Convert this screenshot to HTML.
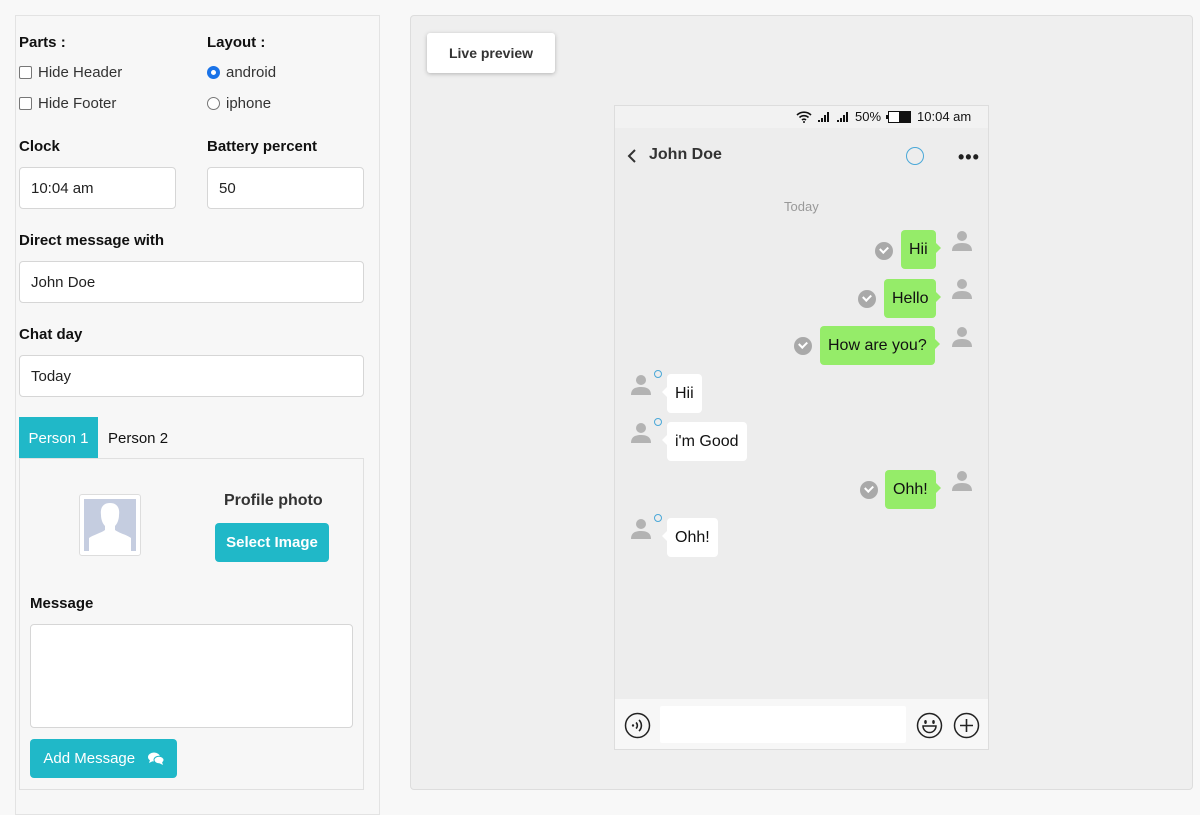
<!DOCTYPE html>
<html><head><style>
*{box-sizing:border-box;margin:0;padding:0}
body{width:1200px;height:796px;background:#f8f8f8;font-family:"Liberation Sans",Arial,sans-serif;position:relative;overflow:hidden;color:#111}
.a{position:absolute}
.lbl{font-size:15px;font-weight:bold;color:#111}
.inp{position:absolute;background:#fff;border:1px solid #d6d6d6;border-radius:4px;font-size:15px;padding-left:11px;display:flex;align-items:center;color:#222}
.opt{font-size:15px;color:#333;display:flex;align-items:center}
.cb{width:13px;height:13px;border:1px solid #777;border-radius:2px;margin-right:6px;background:#fff}
.rb{width:13px;height:13px;border:1px solid #777;border-radius:50%;margin-right:6px;background:#fff}
.btn{position:absolute;background:#20b8c8;color:#fff;border-radius:4px;font-size:15px;display:flex;align-items:center;justify-content:center}
.b{position:absolute;height:39px;border-radius:4px;font-size:16px;display:flex;align-items:center;padding:0 8px;color:#111}
.g{background:#95ec69}
.w{background:#fff}
.g:after{content:"";position:absolute;right:-5px;top:13px;border:5px solid transparent;border-right:0;border-left-color:#95ec69}
.w:before{content:"";position:absolute;left:-5px;top:13px;border:5px solid transparent;border-left:0;border-right-color:#fff}
.chk{position:absolute;width:18px;height:18px;border-radius:50%;background:#a9a9a9}
.chk:after{content:"";position:absolute;left:5px;top:4px;width:6px;height:4px;border-left:2px solid #fff;border-bottom:2px solid #fff;transform:rotate(-45deg)}
.av{position:absolute;width:20px;height:22px}
.dot{position:absolute;width:8px;height:8px;border:1px solid #4aa8d8;border-radius:50%}
</style></head><body>
<div class="a" style="left:15px;top:15px;width:365px;height:800px;background:#f7f7f7;border:1px solid #e3e3e3"></div>
<div class="a lbl" style="left:19px;top:34px">Parts :</div>
<div class="a lbl" style="left:207px;top:34px">Layout :</div>
<div class="a opt" style="left:19px;top:64px"><span class="cb"></span>Hide Header</div>
<div class="a opt" style="left:19px;top:95px"><span class="cb"></span>Hide Footer</div>
<div class="a opt" style="left:207px;top:64px"><span class="rb" style="border:4px solid #1a73e8"></span>android</div>
<div class="a opt" style="left:207px;top:95px"><span class="rb"></span>iphone</div>
<div class="a lbl" style="left:19px;top:138px">Clock</div>
<div class="a lbl" style="left:207px;top:138px">Battery percent</div>
<div class="inp" style="left:19px;top:167px;width:157px;height:42px">10:04 am</div>
<div class="inp" style="left:207px;top:167px;width:157px;height:42px">50</div>
<div class="a lbl" style="left:19px;top:232px">Direct message with</div>
<div class="inp" style="left:19px;top:261px;width:345px;height:42px">John Doe</div>
<div class="a lbl" style="left:19px;top:326px">Chat day</div>
<div class="inp" style="left:19px;top:355px;width:345px;height:42px">Today</div>
<div class="a" style="left:19px;top:417px;width:79px;height:42px;background:#20b8c8;color:#fff;font-size:15px;display:flex;align-items:center;justify-content:center">Person 1</div>
<div class="a" style="left:108px;top:430px;font-size:15px">Person 2</div>
<div class="a" style="left:19px;top:458px;width:345px;height:332px;border:1px solid #e0e0e0;background:#f7f7f7"></div>
<div class="a" style="left:79px;top:494px;width:62px;height:62px;background:#fff;border:1px solid #ddd;border-radius:3px;padding:4px">
<svg width="52" height="52" viewBox="0 0 52 52"><rect width="52" height="52" fill="#c5cde0"/><path d="M26 4c-7 0-10 5-9 12 0 5 2 9 4 11v4c-4 3-12 5-16 8v13h42V39c-4-3-12-5-16-8v-4c2-2 4-6 4-11 1-7-2-12-9-12z" fill="#fff"/></svg></div>
<div class="a" style="left:224px;top:492px;font-size:16px;font-weight:bold;color:#333">Profile photo</div>
<div class="btn" style="left:215px;top:523px;width:114px;height:39px;font-weight:bold">Select Image</div>
<div class="a lbl" style="left:30px;top:595px">Message</div>
<div class="a" style="left:30px;top:624px;width:323px;height:104px;background:#fff;border:1px solid #d6d6d6;border-radius:4px"></div>
<div class="btn" style="left:30px;top:739px;width:147px;height:39px">Add Message&nbsp;&nbsp;&nbsp;<svg width="16" height="13" viewBox="0 0 16 13"><ellipse cx="6" cy="5" rx="6" ry="4.5" fill="#fff"/><path d="M2 8l-1 3 4-2z" fill="#fff"/><ellipse cx="11" cy="8" rx="5" ry="3.8" fill="#fff" stroke="#20b8c8" stroke-width="1"/><path d="M14 10l1 3-4-2z" fill="#fff"/></svg></div>

<div class="a" style="left:410px;top:15px;width:783px;height:775px;background:#efefef;border:1px solid #ddd;border-radius:4px"></div>
<div class="a" style="left:427px;top:33px;width:128px;height:40px;background:#fff;box-shadow:0 1px 4px rgba(0,0,0,.25);border-radius:3px;font-size:14px;font-weight:bold;color:#333;display:flex;align-items:center;justify-content:center">Live preview</div>

<div class="a" style="left:614px;top:105px;width:375px;height:645px;background:#ededed;border:1px solid #ddd"></div>
<div class="a" style="left:615px;top:106px;width:373px;height:22px;background:#f2f2f2"></div>
<div class="a" style="left:796px;top:109px;font-size:13px;color:#111;display:flex;align-items:center;gap:5px">
<svg width="16" height="12" viewBox="0 0 16 12"><path d="M1 4a10 10 0 0 1 14 0M3.5 6.5a6.5 6.5 0 0 1 9 0M6 9a3 3 0 0 1 4 0" stroke="#111" stroke-width="1.6" fill="none"/><circle cx="8" cy="11" r="1" fill="#111"/></svg>
<svg width="14" height="10"><rect x="1" y="8" width="2" height="2" fill="#111"/><rect x="4" y="6" width="2" height="4" fill="#111"/><rect x="7" y="3" width="2" height="7" fill="#111"/><rect x="10" y="0" width="2" height="10" fill="#111"/></svg>
<svg width="14" height="10"><rect x="1" y="8" width="2" height="2" fill="#111"/><rect x="4" y="6" width="2" height="4" fill="#111"/><rect x="7" y="3" width="2" height="7" fill="#111"/><rect x="10" y="0" width="2" height="10" fill="#111"/></svg>
<span>50%</span><svg width="26" height="12"><rect x="0" y="4" width="2" height="4" fill="#111"/><rect x="2.5" y="0.5" width="22" height="11" fill="#fff" stroke="#111"/><rect x="13" y="1" width="11" height="10" fill="#111"/></svg><span>10:04 am</span></div>
<svg class="a" style="left:627px;top:149px" width="10" height="14"><path d="M8 1L2 7l6 6" stroke="#333" stroke-width="2" fill="none"/></svg>
<div class="a" style="left:649px;top:146px;font-size:16px;font-weight:bold;color:#333">John Doe</div>
<div class="a" style="left:906px;top:147px;width:18px;height:18px;border:1.5px solid #4aa8d8;border-radius:50%"></div>
<div class="a" style="left:958px;top:147px;font-size:18px;font-weight:bold;color:#222;letter-spacing:1px">•••</div>
<div class="a" style="left:784px;top:199px;font-size:13px;color:#999">Today</div>

<svg width="0" height="0" style="position:absolute"><defs><symbol id="p" viewBox="0 0 20 22"><circle cx="10" cy="6" r="5" fill="#b3b3b3"/><path d="M0 21c0-6 4-8 10-8s10 2 10 8z" fill="#b3b3b3"/></symbol></defs></svg>

<div class="chk" style="left:875px;top:242px"></div><div class="b g" style="left:901px;top:230px">Hii</div><svg class="av" style="left:952px;top:230px"><use href="#p"/></svg>
<div class="chk" style="left:858px;top:290px"></div><div class="b g" style="left:884px;top:279px">Hello</div><svg class="av" style="left:952px;top:278px"><use href="#p"/></svg>
<div class="chk" style="left:794px;top:337px"></div><div class="b g" style="left:820px;top:326px">How are you?</div><svg class="av" style="left:952px;top:326px"><use href="#p"/></svg>
<svg class="av" style="left:631px;top:374px"><use href="#p"/></svg><div class="dot" style="left:654px;top:370px"></div><div class="b w" style="left:667px;top:374px">Hii</div>
<svg class="av" style="left:631px;top:422px"><use href="#p"/></svg><div class="dot" style="left:654px;top:418px"></div><div class="b w" style="left:667px;top:422px">i'm Good</div>
<div class="chk" style="left:860px;top:481px"></div><div class="b g" style="left:885px;top:470px">Ohh!</div><svg class="av" style="left:952px;top:470px"><use href="#p"/></svg>
<svg class="av" style="left:631px;top:518px"><use href="#p"/></svg><div class="dot" style="left:654px;top:514px"></div><div class="b w" style="left:667px;top:518px">Ohh!</div>

<div class="a" style="left:615px;top:699px;width:373px;height:50px;background:#f7f7f7"></div>
<svg class="a" style="left:624px;top:712px" width="27" height="27" viewBox="0 0 27 27"><circle cx="13.5" cy="13.5" r="12" stroke="#222" stroke-width="1.5" fill="none"/><circle cx="9" cy="13.5" r="1.2" fill="#222"/><path d="M12 10.5a4 4 0 0 1 0 6M15 8a7.5 7.5 0 0 1 0 11" stroke="#222" stroke-width="1.6" fill="none"/></svg>
<div class="a" style="left:660px;top:706px;width:246px;height:37px;background:#fff;border-radius:2px"></div>
<svg class="a" style="left:916px;top:712px" width="27" height="27" viewBox="0 0 27 27"><circle cx="13.5" cy="13.5" r="12" stroke="#222" stroke-width="1.5" fill="none"/><ellipse cx="9.5" cy="10" rx="1.3" ry="2" fill="#222"/><ellipse cx="17.5" cy="10" rx="1.3" ry="2" fill="#222"/><path d="M7 14h13a6.5 6.5 0 0 1-13 0z" stroke="#222" stroke-width="1.5" fill="none"/></svg>
<svg class="a" style="left:953px;top:712px" width="27" height="27" viewBox="0 0 27 27"><circle cx="13.5" cy="13.5" r="12" stroke="#222" stroke-width="1.5" fill="none"/><path d="M13.5 7v13M7 13.5h13" stroke="#222" stroke-width="1.6"/></svg>
</body></html>
